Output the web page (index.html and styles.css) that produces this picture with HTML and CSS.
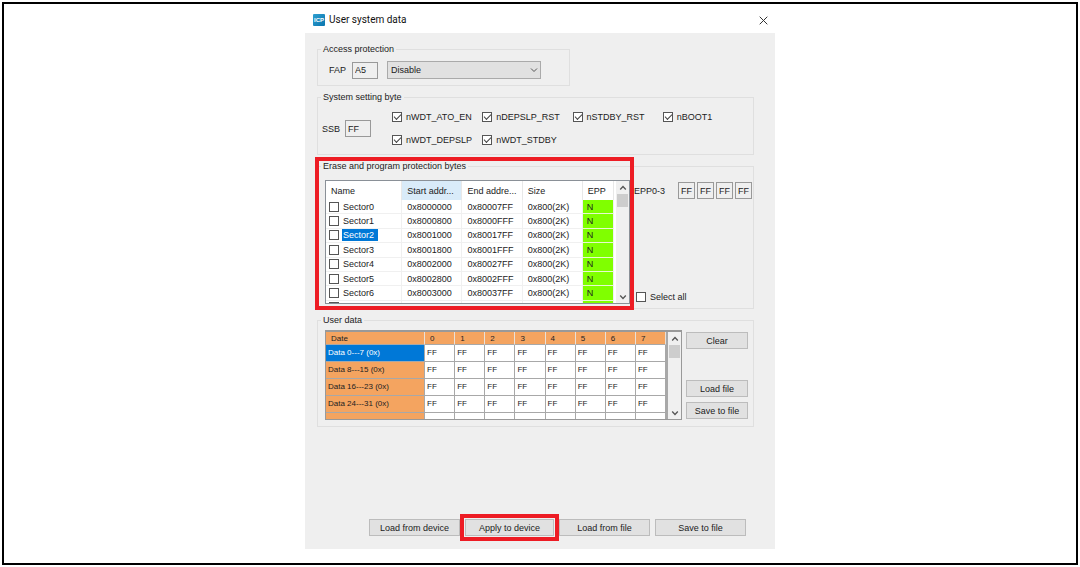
FILE: index.html
```html
<!DOCTYPE html>
<html lang="en">
<head>
<meta charset="utf-8">
<title>User system data</title>
<link rel="stylesheet" href="styles.css">
</head>
<body>
<div class="page">
<main class="dialog">
  <header class="titlebar">
    <span class="logo">ICP</span>
    <h1 class="title">User system data</h1>
    <button class="close" type="button" aria-label="Close"><svg width="9" height="9" viewBox="0 0 9 9"><path d="M0.7 0.7L8.3 8.3M8.3 0.7L0.7 8.3"/></svg></button>
  </header>
  <form class="content">
    <fieldset class="group access">
      <legend>Access protection</legend>
      <div class="access-row">
        <label for="fap">FAP</label>
        <input class="hex" id="fap" value="A5" readonly>
        <div class="select-wrap">
          <select aria-label="Protection level"><option>Disable</option><option>Enable</option></select>
          <svg class="chevron" width="8" height="6" viewBox="0 0 8 6"><path d="M1 1.5L4 4.5L7 1.5"/></svg>
        </div>
      </div>
    </fieldset>

    <fieldset class="group">
      <legend>System setting byte</legend>
      <div class="ssb-row">
        <label for="ssb">SSB</label>
        <input class="hex" id="ssb" value="FF" readonly>
        <div class="options">
          <label class="check"><input type="checkbox" checked>nWDT_ATO_EN</label>
          <label class="check"><input type="checkbox" checked>nDEPSLP_RST</label>
          <label class="check"><input type="checkbox" checked>nSTDBY_RST</label>
          <label class="check"><input type="checkbox" checked>nBOOT1</label>
          <label class="check"><input type="checkbox" checked>nWDT_DEPSLP</label>
          <label class="check"><input type="checkbox" checked>nWDT_STDBY</label>
        </div>
      </div>
    </fieldset>

    <fieldset class="group protection">
      <legend>Erase and program protection bytes</legend>
      <div class="protection-row">
        <div class="sector-view">
          <div class="clip">
            <table class="sectors">
              <colgroup><col class="c-name"><col class="c-addr"><col class="c-addr"><col class="c-addr"><col class="c-epp"></colgroup>
              <thead><tr><th>Name</th><th class="sorted">Start addr...</th><th>End addre...</th><th>Size</th><th>EPP</th></tr></thead>
              <tbody>
                <tr><td><label class="check"><input type="checkbox"><span>Sector0</span></label></td><td>0x8000000</td><td>0x80007FF</td><td>0x800(2K)</td><td class="epp">N</td></tr>
                <tr><td><label class="check"><input type="checkbox"><span>Sector1</span></label></td><td>0x8000800</td><td>0x8000FFF</td><td>0x800(2K)</td><td class="epp">N</td></tr>
                <tr class="selected"><td><label class="check"><input type="checkbox"><span>Sector2</span></label></td><td>0x8001000</td><td>0x80017FF</td><td>0x800(2K)</td><td class="epp">N</td></tr>
                <tr><td><label class="check"><input type="checkbox"><span>Sector3</span></label></td><td>0x8001800</td><td>0x8001FFF</td><td>0x800(2K)</td><td class="epp">N</td></tr>
                <tr><td><label class="check"><input type="checkbox"><span>Sector4</span></label></td><td>0x8002000</td><td>0x80027FF</td><td>0x800(2K)</td><td class="epp">N</td></tr>
                <tr><td><label class="check"><input type="checkbox"><span>Sector5</span></label></td><td>0x8002800</td><td>0x8002FFF</td><td>0x800(2K)</td><td class="epp">N</td></tr>
                <tr><td><label class="check"><input type="checkbox"><span>Sector6</span></label></td><td>0x8003000</td><td>0x80037FF</td><td>0x800(2K)</td><td class="epp">N</td></tr>
                <tr><td><label class="check"><input type="checkbox" aria-label="Next sector"></label></td><td></td><td></td><td></td><td class="epp"></td></tr>
              </tbody>
            </table>
          </div>
          <div class="scrollbar">
            <svg width="8" height="6" viewBox="0 0 8 6"><path d="M1.2 4.5L4 1.5L6.8 4.5"/></svg>
            <span class="thumb"></span>
            <svg class="down" width="8" height="6" viewBox="0 0 8 6"><path d="M1.2 1.5L4 4.5L6.8 1.5"/></svg>
          </div>
        </div>
        <div class="epp-side">
          <div class="epp-values">
            <span class="epp-label">EPP0-3</span>
            <input class="hex small" value="FF" aria-label="EPP0" readonly>
            <input class="hex small" value="FF" aria-label="EPP1" readonly>
            <input class="hex small" value="FF" aria-label="EPP2" readonly>
            <input class="hex small" value="FF" aria-label="EPP3" readonly>
          </div>
          <label class="check"><input type="checkbox">Select all</label>
        </div>
      </div>
      <span class="highlight"></span>
    </fieldset>

    <fieldset class="group">
      <legend>User data</legend>
      <div class="data-row">
        <div class="data-view">
          <div class="clip">
            <table class="data">
              <thead><tr><th class="first">Date</th><th>0</th><th>1</th><th>2</th><th>3</th><th>4</th><th>5</th><th>6</th><th>7</th></tr></thead>
              <tbody>
                <tr class="selected"><th>Data 0---7 (0x)</th><td>FF</td><td>FF</td><td>FF</td><td>FF</td><td>FF</td><td>FF</td><td>FF</td><td>FF</td></tr>
                <tr><th>Data 8---15 (0x)</th><td>FF</td><td>FF</td><td>FF</td><td>FF</td><td>FF</td><td>FF</td><td>FF</td><td>FF</td></tr>
                <tr><th>Data 16---23 (0x)</th><td>FF</td><td>FF</td><td>FF</td><td>FF</td><td>FF</td><td>FF</td><td>FF</td><td>FF</td></tr>
                <tr><th>Data 24---31 (0x)</th><td>FF</td><td>FF</td><td>FF</td><td>FF</td><td>FF</td><td>FF</td><td>FF</td><td>FF</td></tr>
                <tr><th></th><td></td><td></td><td></td><td></td><td></td><td></td><td></td><td></td></tr>
              </tbody>
            </table>
          </div>
          <div class="scrollbar">
            <svg width="8" height="6" viewBox="0 0 8 6"><path d="M1.2 4.5L4 1.5L6.8 4.5"/></svg>
            <span class="thumb"></span>
            <svg class="down" width="8" height="6" viewBox="0 0 8 6"><path d="M1.2 1.5L4 4.5L6.8 1.5"/></svg>
          </div>
        </div>
        <div class="data-actions">
          <button class="btn clear" type="button">Clear</button>
          <button class="btn" type="button">Load file</button>
          <button class="btn" type="button">Save to file</button>
        </div>
      </div>
    </fieldset>

    <div class="actions">
      <button class="btn" type="button">Load from device</button>
      <div class="marked"><button class="btn" type="button">Apply to device</button><span class="highlight"></span></div>
      <button class="btn" type="button">Load from file</button>
      <button class="btn" type="button">Save to file</button>
    </div>
  </form>
</main>
</div>
</body>
</html>
```
FILE: styles.css
```css
* { box-sizing: border-box; }
body {
  margin: 0;
  background: #fff;
  color: #222;
  font: 9px/12px "Liberation Sans", Arial, sans-serif;
}
input, select, button { font: inherit; color: inherit; margin: 0; }
svg { fill: none; stroke: #555; stroke-width: 1.3; }

.page {
  min-height: calc(100vh - 4px);
  margin: 2px;
  border: 2px solid #000;
}
.dialog {
  display: flex;
  flex-direction: column;
  max-width: 470px;
  min-height: 545px;
  margin: 0 auto;
}
.titlebar {
  display: flex;
  align-items: center;
  gap: 4px;
  height: 29px;
  padding: 3px 7px 0 8px;
}
.logo {
  width: 12px;
  height: 12px;
  border-radius: 1px;
  background: linear-gradient(135deg, #2e9fd0, #0a75ae);
  color: #fff;
  font-size: 6px;
  font-weight: bold;
  text-align: center;
}
.title { margin: 0; color: #111; font: 10px/14px Roboto, "Noto Sans", sans-serif; }
.close { display: flex; margin-left: auto; padding: 0; border: 0; background: none; }
.close svg { stroke: #333; stroke-width: 1; }

.content {
  display: flex;
  flex: 1;
  flex-direction: column;
  gap: 5px;
  padding: 10px 21px 13px 12px;
  background: #efefef;
}
.group {
  position: relative;
  min-width: 0;
  margin: 0;
  padding: 0;
  border: 1px solid #dfdfdf;
}
.group legend { margin-left: 3px; padding: 0 2px; }

.hex {
  width: 26px;
  height: 17px;
  padding: 0 2px;
  border: 1px solid #999;
  background: #efefef;
}
.hex.small { width: 17px; text-align: center; padding: 0; }

.check { display: flex; align-items: center; gap: 4px; }
.check input {
  position: relative;
  flex: none;
  width: 10px;
  height: 10px;
  border: 1px solid #555;
  background: #fff;
  appearance: none;
}
.check input:checked::before {
  content: "";
  position: absolute;
  left: 1px;
  top: 1px;
  width: 6px;
  height: 3px;
  border: solid #444;
  border-width: 0 0 1px 1px;
  transform: rotate(-45deg);
}

.access { width: 253px; }
.access-row { display: flex; align-items: center; padding: 6px 28px 6px 11px; }
.access-row .hex { margin: 0 9px 0 6px; }
.select-wrap { position: relative; flex: 1; }
.select-wrap select {
  display: block;
  width: 100%;
  height: 18px;
  padding: 0 3px;
  border: 1px solid #aaa;
  border-radius: 0;
  background: #e1e1e1;
  appearance: none;
}
.chevron { position: absolute; right: 3px; top: 6px; pointer-events: none; }
.chevron { stroke-width: 1; }

.ssb-row { display: flex; align-items: center; height: 51px; padding-left: 4px; }
.ssb-row .hex { margin: 0 21px 0 5px; }
.options { display: grid; flex: 1; grid-template-columns: repeat(4, 1fr); gap: 11px 0; }

.protection-row { display: flex; padding: 8px 1px 4px 7px; }
.sector-view {
  display: flex;
  flex: none;
  width: 305px;
  height: 124px;
  border: 1px solid #8a9097;
  background: #fff;
}
.clip { flex: 1; min-width: 0; overflow: hidden; }
table { width: 100%; border-collapse: separate; border-spacing: 0; table-layout: fixed; }
th, td { padding: 0; font-weight: normal; text-align: left; white-space: nowrap; }
.sectors { height: 134px; }
.sectors th { height: 19px; padding-left: 5px; border-right: 1px solid #e8e8e8; }
.sectors td { height: 14px; padding-left: 5px; border-right: 1px solid #f0f0f0; border-bottom: 1px solid #f0f0f0; }
.sectors td:first-child { padding-left: 3px; }
.sectors .sorted { background: #d9ebf9; }
.c-name { width: 76px; }
.c-addr { width: 60px; }
.c-epp { width: 31px; }
.sectors .epp { padding-left: 4px; background: #80ff00; border-bottom-color: #e8f8d0; }
.sectors .check { gap: 3px; }
.sectors .check span { padding: 0 1px; }
.selected .check span { padding-right: 4px; background: #0078d7; color: #fff; }

.scrollbar {
  display: flex;
  flex: none;
  flex-direction: column;
  align-items: center;
  width: 13px;
  margin-left: 2px;
  padding: 4px 0 3px;
  background: #f0f0f0;
}
.thumb { width: 11px; height: 13px; margin-top: 3px; background: #cdcdcd; }
.down { margin-top: auto; }

.epp-side { display: flex; flex: 1; flex-direction: column; justify-content: space-between; padding: 2px 0 1px 4px; }
.epp-side .check { padding-left: 2px; }
.epp-values { display: flex; align-items: center; gap: 2px; }
.epp-label { margin-right: auto; }

.highlight {
  position: absolute;
  inset: -15px auto -2px -3px;
  width: 319px;
  border: 4px solid #ed1c24;
  pointer-events: none;
}

.data-row { display: flex; gap: 4px; padding: 4px 5px 6px 7px; }
.data-view {
  display: flex;
  flex: 1;
  min-width: 0;
  height: 90px;
  border: 1px solid #999;
  border-top-width: 2px;
  background: #fff;
}
.data-view .clip { border-right: 2px solid #a8a8a8; }
.data-view .scrollbar { margin: 0; }
.data { font-size: 8px; }
.data th, .data td { height: 17px; padding-left: 2px; border-right: 1px solid #a8a8a8; border-bottom: 1px solid #a8a8a8; }
.data th { background: #f4a460; }
.data thead th { height: 13px; padding-left: 5px; line-height: 11px; border-right-color: #e8e0d8; }
.data .first { width: 99px; }
.data .selected th { background: #0078d7; color: #fff; }

.btn {
  height: 17px;
  padding: 0;
  border: 1px solid #bcbcbc;
  background: #e1e1e1;
}
.data-actions { display: flex; flex: none; flex-direction: column; gap: 5px; width: 62px; padding: 2px 0 1px; }
.clear { margin-bottom: auto; }

.actions { display: flex; gap: 5px; margin-top: auto; padding: 0 8px 0 52px; }
.actions .btn { flex: 1; }
.marked { position: relative; display: flex; flex: 1; }
.marked .highlight { inset: -5px; width: auto; }
```
